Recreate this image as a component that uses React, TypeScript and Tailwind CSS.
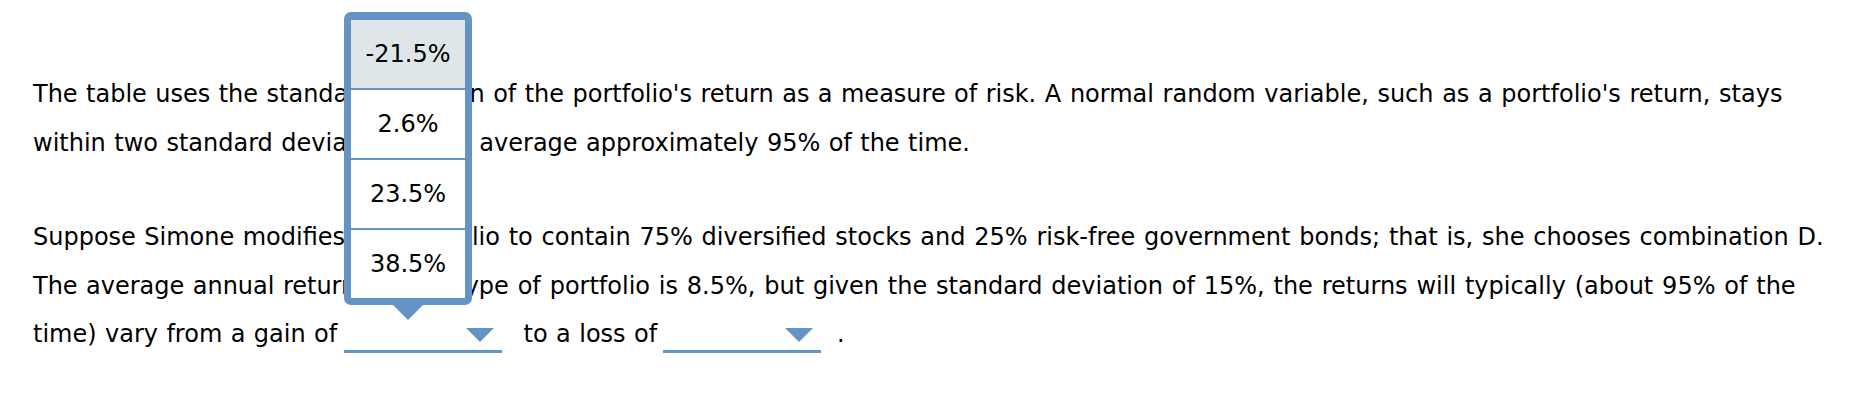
import React from "react";

function Select({ className = "" }: { className?: string }) {
  return (
    <span
      className={`relative inline-block w-[158px] h-[30px] border-b-[3px] border-[#6593c3] align-[-11px] ${className}`}
    >
      <svg
        className="absolute right-[8px] bottom-[8px]"
        width="28"
        height="14"
        viewBox="0 0 28 14"
      >
        <polygon points="0,0 28,0 14,14" fill="#6593c3" />
      </svg>
    </span>
  );
}

const options = ["-21.5%", "2.6%", "23.5%", "38.5%"];

export default function App() {
  return (
    <div
      className="relative min-h-[406px] w-[1852px] bg-white pl-[33px] pt-[70px] text-[24px] leading-[48.5px] text-black [word-spacing:0.8px]"
      style={{ fontFamily: '"DejaVu Sans", Verdana, sans-serif' }}
    >
      <div>
        <div className="whitespace-nowrap">
          The table uses the standa<span className="tracking-[-0.75px]">rd deviatio</span>n of the portfolio's return as a measure of risk.<span className="[word-spacing:1px]"> A normal random variable, such as a portfolio's return, stays</span>
        </div>
        <div className="whitespace-nowrap">
          within two standard devia<span className="tracking-[-0.25px]">tions of its</span> average approximately 95% of the time.
        </div>
      </div>
      <div className="mt-[46px]">
        <div className="whitespace-nowrap">
          Suppose Simone modifies<span className="tracking-[-0.2px]"> her portfo</span>lio<span className="[word-spacing:1.15px]"> to contain 75% diversified stocks and 25% risk-free government bonds; that is, she chooses combination D.</span>
        </div>
        <div className="whitespace-nowrap">
          The average annual return on this type<span className="[word-spacing:1.2px]"> of portfolio is 8.5%, but given the standard deviation of 15%, the returns will typically (about 95% of the</span>
        </div>
        <div className="whitespace-nowrap">
          time) vary from a gain of <Select className="-ml-[2px] mr-[13.5px]" /> to a loss of{" "}
          <Select className="-ml-[3px] mr-[8px]" /> .
        </div>
      </div>

      <div className="absolute left-[344px] top-[12px] flex w-[128px] flex-col items-center [word-spacing:0px]">
        <div className="flex w-full flex-col gap-[2px] rounded-[7px] border-x-[7px] border-t-[8px] border-b-[7px] border-[#6593c3] bg-[#6593c3]">
          {options.map((o, i) => (
            <div
              key={o}
              className={`flex h-[68px] items-center justify-center text-[24px] leading-none text-black ${
                i === 0 ? "bg-[#dfe6e9]" : "bg-white"
              }`}
            >
              {o}
            </div>
          ))}
        </div>
        <svg width="30" height="15" viewBox="0 0 30 15" className="block">
          <polygon points="0,0 30,0 15,15" fill="#6593c3" />
        </svg>
      </div>
    </div>
  );
}
